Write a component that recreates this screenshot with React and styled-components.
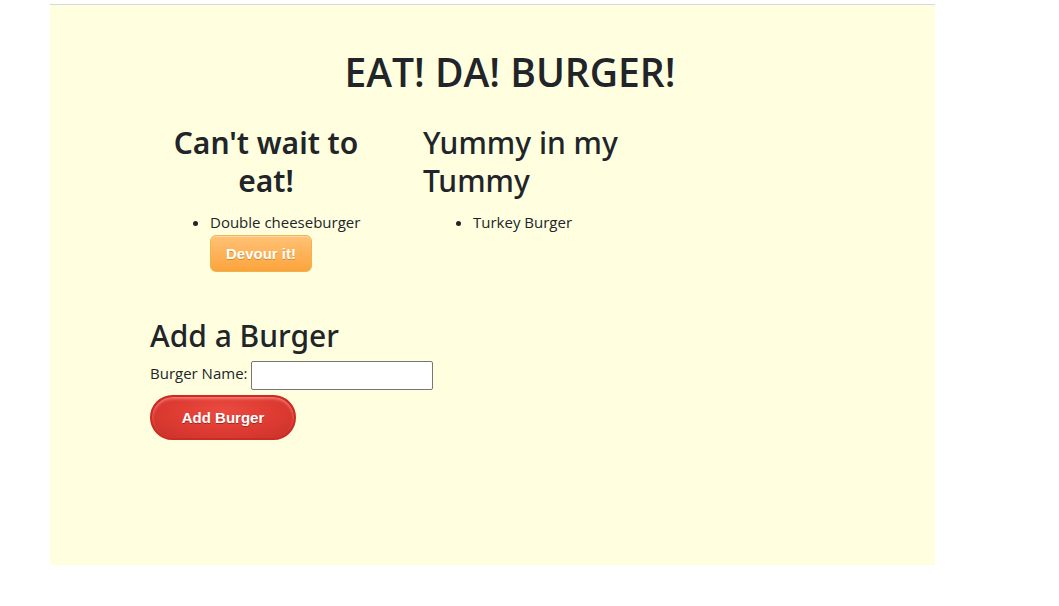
import React from 'react'
import styled, {createGlobalStyle} from 'styled-components'

const Global = createGlobalStyle`
  html, body {
    margin: 0;
    padding: 0;
    background: #fff;
  }
  body {
    font-family: "Open Sans", "Noto Sans", sans-serif;
    color: #212529;
    font-size: 15px;
    line-height: 1.5;
  }
`

const Page = styled.div`
  padding: 4px 0 0 50px;
`

const Jumbo = styled.div`
  box-sizing: border-box;
  width: 885px;
  height: 561px;
  background: #ffffe0;
  border-top: 1px solid #d9d9d9;
  padding: 44px 65px 0 100px;
`

const Title = styled.h1`
  margin: 0 0 28px 0;
  text-align: center;
  font-size: 39px;
  font-weight: 600;
  line-height: 1.2;
`

const Columns = styled.div`
  display: flex;
  gap: 41px;
`

const Column = styled.div`
  width: ${p => p.w}px;
  text-align: ${p => (p.center ? 'center' : 'left')};
`

const H2 = styled.h2`
  margin: 0 0 ${p => p.mb}px 0;
  font-family: "Noto Sans", "Open Sans", sans-serif;
  font-size: ${p => p.size}px;
  font-weight: ${p => (p.bold ? 600 : 500)};
  line-height: 38px;
`

const List = styled.ul`
  margin: 0;
  padding-left: ${p => p.pad}px;
  text-align: left;
  li {
    line-height: 24px;
  }
`

const Devour = styled.button`
  display: block;
  box-sizing: border-box;
  width: 102px;
  height: 37px;
  margin-top: 1px;
  border: 1px solid #eeb44f;
  border-radius: 6px;
  background: linear-gradient(to bottom, #ffc276 0%, #fca43c 100%);
  box-shadow: inset 0 1px 0 0 #ffd9a3;
  color: #fff;
  font-family: "Liberation Sans", Arial, sans-serif;
  font-weight: bold;
  font-size: 15px;
  text-shadow: 0 1px 0 #d18a2c;
  cursor: pointer;
`

const Form = styled.form`
  margin-top: 45px;
`

const Label = styled.label`
  font-size: 15px;
`

const Input = styled.input`
  box-sizing: border-box;
  width: 182px;
  height: 29px;
  margin-left: 3px;
  border: 1px solid #767676;
  border-radius: 2px;
  background: #fff;
  vertical-align: middle;
`

const AddButton = styled.button`
  display: block;
  box-sizing: border-box;
  width: 146px;
  height: 45px;
  margin-top: 5px;
  border: 2px solid #cc2a22;
  border-radius: 23px;
  background: radial-gradient(ellipse at 50% 35%, #ea4a40 0%, #dd3b32 55%, #c8312a 100%);
  box-shadow: inset 0 2px 3px 0 #f27a70;
  color: #fff;
  font-family: "Liberation Sans", Arial, sans-serif;
  font-weight: bold;
  font-size: 15px;
  text-shadow: 0 1px 0 #a3261f;
  cursor: pointer;
`

export default function App() {
  return (
    <Page>
      <Global />
      <Jumbo>
        <Title>EAT! DA! BURGER!</Title>
        <Columns>
          <Column w={232} center>
            <H2 bold size={30} mb={10}>Can't wait to eat!</H2>
            <List pad={60}>
              <li>
                Double cheeseburger
                <Devour>Devour it!</Devour>
              </li>
            </List>
          </Column>
          <Column w={240}>
            <H2 size={30} mb={10}>Yummy in my Tummy</H2>
            <List pad={50}>
              <li>Turkey Burger</li>
            </List>
          </Column>
        </Columns>
        <Form onSubmit={e => e.preventDefault()}>
          <H2 size={30} mb={6}>Add a Burger</H2>
          <Label>
            Burger Name:
            <Input type="text" />
          </Label>
          <AddButton type="submit">Add Burger</AddButton>
        </Form>
      </Jumbo>
    </Page>
  )
}
